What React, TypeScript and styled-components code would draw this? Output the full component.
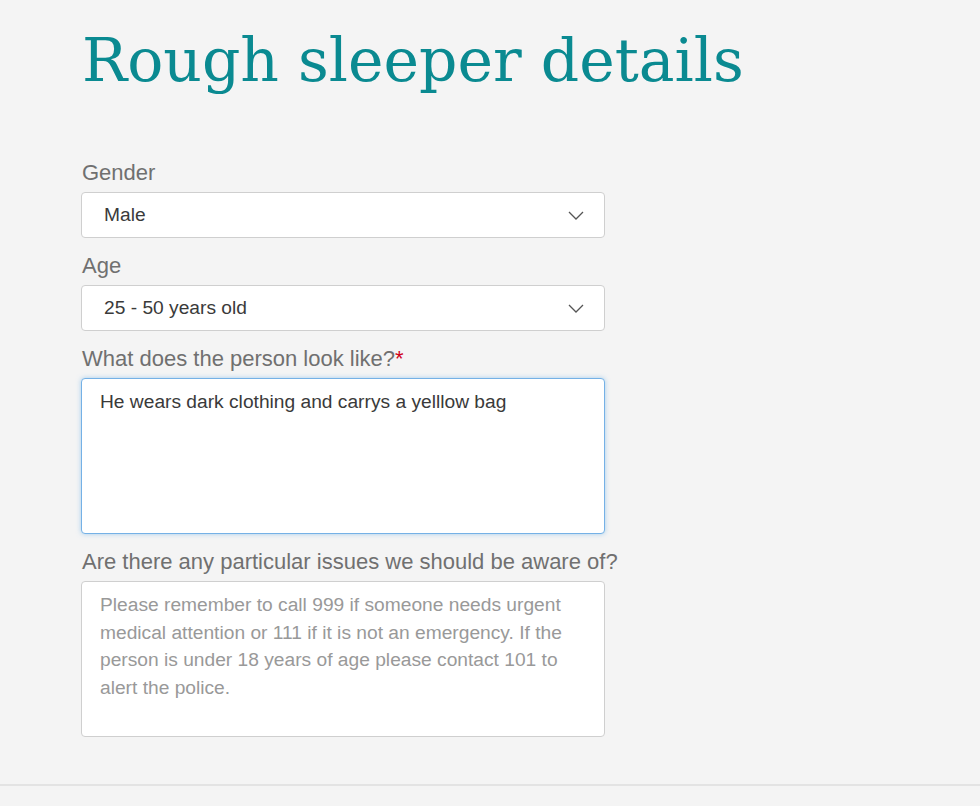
import React from "react";
import styled, { createGlobalStyle } from "styled-components";

const GlobalStyle = createGlobalStyle`
  html, body { margin: 0; padding: 0; background: #f4f4f4; }
  * { box-sizing: border-box; }
`;

const Page = styled.div`
  min-height: 806px;
  background: #f4f4f4;
  font-family: "Liberation Sans", Arial, sans-serif;
  overflow: hidden;
`;

const Content = styled.main`
  padding: 0 0 0 81px;
  width: 606px;
`;

const Title = styled.h1`
  margin: 24px 0 0 1px;
  font-family: "DejaVu Serif", serif;
  font-weight: 400;
  font-size: 60px;
  line-height: 72px;
  color: #0a8a91;
  letter-spacing: 0;
  white-space: nowrap;
`;

const Form = styled.form`
  display: flex;
  flex-direction: column;
  gap: 16px;
  margin-top: 65px;
`;

const Field = styled.div`
  display: flex;
  flex-direction: column;
`;

const Label = styled.label`
  font-size: 22px;
  line-height: 24px;
  color: #707070;
  margin: 0 0 7px 1px;
  white-space: nowrap;
`;

const Required = styled.span`
  color: #d0021b;
`;

const SelectBox = styled.div`
  height: 46px;
  width: 524px;
  background: #fff;
  border: 1px solid #cfcfcf;
  border-radius: 4px;
  display: flex;
  align-items: center;
  padding: 0 21px 0 22px;
  font-size: 19.2px;
  color: #3a3a3a;
`;

const SelectValue = styled.span`
  flex: 1;
`;

const Chevron = styled.svg`
  width: 16px;
  height: 9px;
  margin-right: -1px;
`;

const TextArea = styled.div<{ $focused?: boolean }>`
  width: 524px;
  height: 156px;
  background: #fff;
  border: 1px solid ${(p) => (p.$focused ? "#75b1e6" : "#cfcfcf")};
  border-radius: 4px;
  padding: 9px 18px;
  font-size: 19.2px;
  line-height: 27.5px;
  color: ${(p) => (p.$focused ? "#3a3a3a" : "#999")};
  box-shadow: ${(p) => (p.$focused ? "0 0 5px rgba(102,175,233,0.55)" : "none")};
`;

const Divider = styled.hr`
  margin: 47px 0 0;
  border: none;
  height: 2px;
  background: #e3e3e3;
`;

const Select = ({ value }: { value: string }) => (
  <SelectBox>
    <SelectValue>{value}</SelectValue>
    <Chevron viewBox="0 0 16 9" fill="none">
      <path d="M1 1l7 7 7-7" stroke="#555" strokeWidth="1.3" />
    </Chevron>
  </SelectBox>
);

export default function App() {
  return (
    <Page>
      <GlobalStyle />
      <Content>
        <Title>Rough sleeper details</Title>
        <Form>
          <Field>
            <Label>Gender</Label>
            <Select value="Male" />
          </Field>
          <Field>
            <Label>Age</Label>
            <Select value="25 - 50 years old" />
          </Field>
          <Field>
            <Label>
              What does the person look like?<Required>*</Required>
            </Label>
            <TextArea $focused>He wears dark clothing and carrys a yelllow bag</TextArea>
          </Field>
          <Field>
            <Label>Are there any particular issues we should be aware of?</Label>
            <TextArea>
              Please remember to call 999 if someone needs urgent medical attention or 111 if it is
              not an emergency. If the person is under 18 years of age please contact 101 to alert
              the police.
            </TextArea>
          </Field>
        </Form>
      </Content>
      <Divider />
    </Page>
  );
}
